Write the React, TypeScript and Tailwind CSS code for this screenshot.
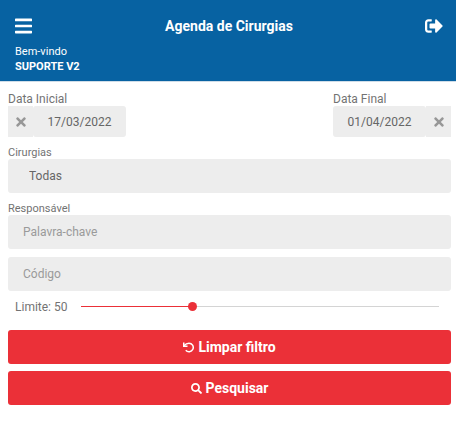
import { useState } from 'react';
import { FaBars, FaSearch, FaSignOutAlt, FaTimes } from 'react-icons/fa';

const LIMIT_MIN = 10;
const LIMIT_MAX = 140;

const initialFilter = {
  startDate: '17/03/2022',
  endDate: '01/04/2022',
  surgery: 'todas',
  keyword: '',
  code: '',
  limit: 50,
};

function UndoIcon() {
  return (
    <svg viewBox="0 0 22 22" fill="none" stroke="currentColor" strokeWidth="3" className="h-[11px] w-[11px]" aria-hidden="true">
      <path d="M1.5 1v7.5H9" />
      <path d="M2 7.5C5.5 3.5 8.5 2.5 12 2.5a8.5 8.5 0 1 1-6.500 14" />
    </svg>
  );
}

function ClearButton({ label, onClick }: { label: string; onClick: () => void }) {
  return (
    <button
      type="button"
      aria-label={label}
      onClick={onClick}
      className="flex w-[25px] items-center justify-center bg-[#ededed] text-[#979797]"
    >
      <FaTimes className="h-[14px] w-[14px]" />
    </button>
  );
}

export default function App() {
  const [filter, setFilter] = useState(initialFilter);

  function update(values: Partial<typeof initialFilter>) {
    setFilter((current) => ({ ...current, ...values }));
  }

  const percent = ((filter.limit - LIMIT_MIN) / (LIMIT_MAX - LIMIT_MIN)) * 100;

  return (
    <div className="min-h-screen bg-white font-[Roboto,sans-serif] text-[12px] text-[#737373]">
      <header className="border-b border-[#cfdde8] bg-[#0762a2] pt-4 pr-[13px] pb-[7px] pl-[15px] text-white">
        <div className="grid grid-cols-[1fr_auto_1fr] items-center">
          <button type="button" aria-label="Menu" className="justify-self-start">
            <FaBars className="h-5 w-[17px]" />
          </button>
          <h1 className="text-[14px] leading-5 font-bold">Agenda de Cirurgias</h1>
          <button type="button" aria-label="Sair" className="justify-self-end">
            <FaSignOutAlt className="h-5 w-[18px]" />
          </button>
        </div>
        <div className="pt-2 text-[11px] leading-[15px]">
          <p>Bem-vindo</p>
          <p className="font-bold">SUPORTE V2</p>
        </div>
      </header>

      <form className="flex flex-col pt-[10px] pr-[5px] pl-2" onSubmit={(e) => e.preventDefault()}>
        <div className="flex justify-between">
          <div>
            <label htmlFor="startDate" className="block leading-[14px]">
              Data Inicial
            </label>
            <div className="flex h-[31px]">
              <ClearButton label="Limpar data inicial" onClick={() => update({ startDate: '' })} />
              <input
                id="startDate"
                value={filter.startDate}
                onChange={(e) => update({ startDate: e.target.value })}
                className="w-[93px] rounded-[3px] bg-[#ededed] text-center text-[#666]"
              />
            </div>
          </div>
          <div>
            <label htmlFor="endDate" className="block leading-[14px]">
              Data Final
            </label>
            <div className="flex h-[31px]">
              <input
                id="endDate"
                value={filter.endDate}
                onChange={(e) => update({ endDate: e.target.value })}
                className="w-[93px] rounded-[3px] bg-[#ededed] text-center text-[#666]"
              />
              <ClearButton label="Limpar data final" onClick={() => update({ endDate: '' })} />
            </div>
          </div>
        </div>

        <label htmlFor="surgery" className="mt-[10px] text-[11px] leading-3">
          Cirurgias
        </label>
        <select
          id="surgery"
          value={filter.surgery}
          onChange={(e) => update({ surgery: e.target.value })}
          className="h-[34px] w-full appearance-none rounded-[3px] bg-[#ededed] px-[21px] text-[#666]"
        >
          <option value="todas">Todas</option>
        </select>

        <label htmlFor="keyword" className="mt-[10px] text-[11px] leading-3">
          Responsável
        </label>
        <input
          id="keyword"
          value={filter.keyword}
          onChange={(e) => update({ keyword: e.target.value })}
          placeholder="Palavra-chave"
          className="h-[34px] w-full rounded-[3px] bg-[#ededed] px-[15px] text-[#666] placeholder:text-[#9a9a9a]"
        />
        <input
          aria-label="Código"
          value={filter.code}
          onChange={(e) => update({ code: e.target.value })}
          placeholder="Código"
          className="mt-2 h-[34px] w-full rounded-[3px] bg-[#ededed] px-[15px] text-[#666] placeholder:text-[#9a9a9a]"
        />

        <div className="flex h-[31px] items-center gap-[13px] pr-3 pl-[7px]">
          <label htmlFor="limit">Limite: {filter.limit}</label>
          <div className="relative flex flex-1 items-center">
            <div className="absolute inset-x-0 h-px bg-[#d4d4d4]">
              <div className="h-px bg-[#eb3038]" style={{ width: `${percent}%` }} />
            </div>
            <input
              id="limit"
              type="range"
              min={LIMIT_MIN}
              max={LIMIT_MAX}
              value={filter.limit}
              onChange={(e) => update({ limit: Number(e.target.value) })}
              className="relative h-[9px] w-full appearance-none bg-transparent [&::-webkit-slider-thumb]:h-[9px] [&::-webkit-slider-thumb]:w-[9px] [&::-webkit-slider-thumb]:appearance-none [&::-webkit-slider-thumb]:rounded-full [&::-webkit-slider-thumb]:bg-[#eb3038]"
            />
          </div>
        </div>

        <div className="mt-2 flex flex-col gap-[7px] text-[14px] font-bold text-white">
          <button
            type="button"
            onClick={() => setFilter(initialFilter)}
            className="flex h-[34px] items-center justify-center gap-1 rounded-[3px] bg-[#eb3038]"
          >
            <UndoIcon />
            Limpar filtro
          </button>
          <button
            type="submit"
            className="flex h-[34px] items-center justify-center gap-1 rounded-[3px] bg-[#eb3038]"
          >
            <FaSearch className="h-[11px] w-[11px]" />
            Pesquisar
          </button>
        </div>
      </form>
    </div>
  );
}
